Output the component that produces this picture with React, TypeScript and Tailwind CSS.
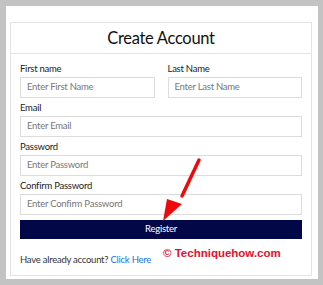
import React from 'react';

const font = { fontFamily: 'Lato, "Open Sans", sans-serif' };

function Field({ label, placeholder }: { label: string; placeholder: string }) {
  return (
    <div className="flex flex-col">
      <label className="text-[9.5px] tracking-[-0.25px] leading-[11px] text-[#222] mb-[3px]">{label}</label>
      <div className="h-[21px] border border-[#dcdcdc] px-[6px] flex items-center text-[9.5px] tracking-[-0.25px] text-[#777]">
        {placeholder}
      </div>
    </div>
  );
}

export default function App() {
  return (
    <div className="w-[323px] h-[285px] bg-[#c3c3c3] p-[6px] pr-[5px]" style={font}>
      <div className="relative w-full h-full bg-white pt-[16px] pl-[4px] pr-[6px] pb-[4px]">
        <div className="h-[254px] border border-[#e3e3e3] flex flex-col">
          <div className="h-[31px] border-b border-[#e3e3e3] flex items-center justify-center text-[16.5px] tracking-[-0.3px] text-[#111]">
            Create Account
          </div>
          <div className="px-[9px] pt-[9px] flex flex-col gap-[4px]">
            <div className="grid grid-cols-2 gap-[13px]">
              <Field label="First name" placeholder="Enter First Name" />
              <Field label="Last Name" placeholder="Enter Last Name" />
            </div>
            <Field label="Email" placeholder="Enter Email" />
            <Field label="Password" placeholder="Enter Password" />
            <Field label="Confirm Password" placeholder="Enter Confirm Password" />
            <div className="mt-[1px] h-[19px] bg-[#020847] text-white text-[9.5px] tracking-[-0.25px] flex items-center justify-center">
              Register
            </div>
            <div className="mt-[11px] text-[9.5px] tracking-[-0.25px] leading-[12px] text-[#333]">
              Have already account? <span className="text-[#1a73e8]">Click Here</span>
            </div>
          </div>
        </div>
        <div
          className="absolute left-[157px] top-[241px] text-[11.5px] leading-[12px] font-bold text-[#e8102a]"
          style={{ fontFamily: '"Liberation Sans", Arial, sans-serif' }}
        >
          © Techniquehow.com
        </div>
        <svg className="absolute left-0 top-0" width="312" height="273" viewBox="0 0 312 273">
          <line x1="193" y1="154" x2="176" y2="190" stroke="#ee0a0a" strokeWidth="3.5" strokeLinecap="round" />
          <polygon points="161,193 176,198 157,215" fill="#ee0a0a" />
        </svg>
      </div>
    </div>
  );
}
